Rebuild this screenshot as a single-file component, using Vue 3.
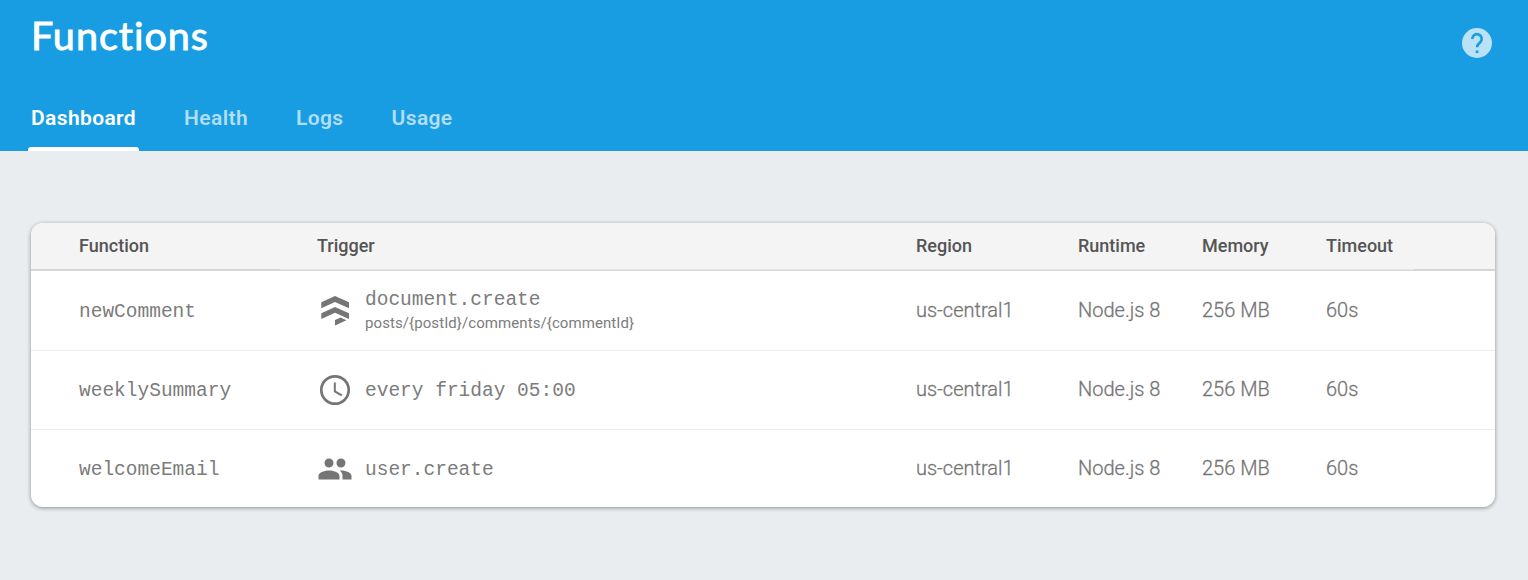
<script setup>
const tabs = ['Dashboard', 'Health', 'Logs', 'Usage']
const columns = ['Function', 'Trigger', 'Region', 'Runtime', 'Memory', 'Timeout']
const rows = [
  { name: 'newComment', icon: 'firestore', trigger: 'document.create', path: 'posts/{postId}/comments/{commentId}' },
  { name: 'weeklySummary', icon: 'clock', trigger: 'every friday 05:00' },
  { name: 'welcomeEmail', icon: 'people', trigger: 'user.create' },
]
</script>

<template>
  <div class="page">
    <header class="top">
      <div class="title-bar">
        <h1>Functions</h1>
        <svg class="help" viewBox="0 0 30 30">
          <circle cx="15" cy="15" r="15" />
          <path class="mark" d="M10.300 10.900a4.700 4.700 0 1 1 8.200 3.100c-1.500 1.600-3.400 2.400-3.400 5.300" />
          <path class="dot" d="M13.700 22.500h2.700v2.600h-2.700z" />
        </svg>
      </div>
      <nav>
        <a v-for="(t, i) in tabs" :key="t" :class="{ active: i === 0 }"><span>{{ t }}</span></a>
      </nav>
    </header>
    <main>
      <section class="card">
        <div class="grid head">
          <div v-for="c in columns" :key="c">{{ c }}</div>
        </div>
        <div v-for="r in rows" :key="r.name" class="grid row">
          <div class="mono name">{{ r.name }}</div>
          <div class="trigger">
            <svg v-if="r.icon === 'firestore'" viewBox="0 0 36 36">
              <path d="M4.300 11.300 18 5l14 6.300v5.900l-14-6.300-13.700 6.300zM4.300 22.200 18 15.900l14 6.300v5.900l-14-6.300-13.700 6.300zM18 29l5.500-2.500 6 2.700L18 34.500z" />
            </svg>
            <svg v-else-if="r.icon === 'clock'" viewBox="0 0 36 36">
              <circle cx="18" cy="18" r="13.700" fill="none" stroke="#757575" stroke-width="2.700" />
              <path d="M16.800 10.500h2v8.200l6.500 3.700-1 1.800-7.500-4.300z" />
            </svg>
            <svg v-else viewBox="0 0 24 24">
              <path d="M16 11c1.660 0 2.990-1.340 2.990-3S17.660 5 16 5s-3 1.340-3 3 1.340 3 3 3zm-8 0c1.660 0 2.990-1.340 2.990-3S9.660 5 8 5 5 6.340 5 8s1.340 3 3 3zm0 2c-2.330 0-7 1.170-7 3.500V19h14v-2.500c0-2.330-4.670-3.500-7-3.500zm8 0c-.29 0-.62.02-.97.05 1.160.84 1.970 1.970 1.970 3.450V19h6v-2.500c0-2.330-4.670-3.500-7-3.500z" />
            </svg>
            <div class="event">
              <div class="mono">{{ r.trigger }}</div>
              <div v-if="r.path" class="path">{{ r.path }}</div>
            </div>
          </div>
          <div class="cell">us-central1</div>
          <div class="cell">Node.js 8</div>
          <div class="cell">256 MB</div>
          <div class="cell">60s</div>
        </div>
      </section>
    </main>
  </div>
</template>

<style>
body { margin: 0; background: #e9edf0; }
</style>

<style scoped>
.page { height: 580px; overflow: hidden; background: #e9edf0; font-family: Roboto, sans-serif; }
.top { height: 151px; box-sizing: border-box; background: #189de2; display: flex; flex-direction: column; justify-content: space-between; }
.title-bar { display: flex; justify-content: space-between; padding: 10px 36px 0 31px; }
h1 { margin: 0; font: 400 39.500px/50px Lato, sans-serif; color: #fff; letter-spacing: 1px; -webkit-text-stroke: .9px #fff; }
.help { width: 30px; height: 30px; margin-top: 18px; fill: #bae2f6; }
.mark { fill: none; stroke: #189de2; stroke-width: 2.700; }
.dot { fill: #189de2; }
nav { display: flex; gap: 42px; padding-left: 28px; }
nav a { height: 66px; padding: 0 3px; box-sizing: border-box; font-size: 21px; line-height: 66px; font-weight: 600; letter-spacing: .38px; color: #b2def5; position: relative; }
nav a.active { color: #fff; }
nav a.active::after { content: ''; position: absolute; left: 0; right: 0; bottom: 0; height: 4px; border-radius: 3px 3px 0 0; background: #fff; }
main { padding: 72px 33px 0 31px; }
.card { height: 284px; background: #fff; border-radius: 12px; overflow: hidden; box-shadow: 0 1px 4px rgba(0, 0, 0, .4); }
.grid { display: grid; grid-template-columns: 238px 599px 162px 124px 124px 1fr; align-items: center; padding-left: 48px; }
.head { height: 48px; box-sizing: border-box; padding-bottom: 2px; background: linear-gradient(#e7e7e7, #e7e7e7) 249px 46px / 1134px 1px no-repeat, linear-gradient(#d6d6d6, #d6d6d6) 0 46px / 100% 2px no-repeat, #f4f4f4; font-size: 18px; line-height: 21px; font-weight: 500; color: #555; }
.head > div { padding-bottom: 2px; }
.row { height: 79px; color: #757575; font-size: 20px; }
.row + .row { box-shadow: inset 0 1px #ededed; }
.cell { padding-bottom: 2px; font-weight: 300; -webkit-text-stroke: .3px #757575; }
.mono { font-family: "Liberation Mono", monospace; font-weight: 400; font-size: 19.500px; line-height: 26px; color: #7c7c7c; white-space: pre; }
.name { padding-top: 2px; }
.trigger { display: flex; align-items: center; gap: 12px; }
.event { padding-top: 2px; }
.trigger svg { width: 36px; height: 36px; fill: #757575; }
.trigger svg:has(+ .event .path) { margin-bottom: 3px; }
.event:has(.path) { padding-top: 1px; }
.path { font-size: 15px; line-height: 20px; font-weight: 400; letter-spacing: .08px; margin-bottom: 3px; color: #7c7c7c; }
</style>
